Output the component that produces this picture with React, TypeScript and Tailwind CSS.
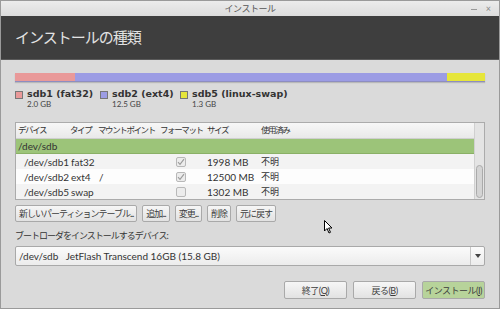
const font = { fontFamily: '"Lato", "Noto Sans CJK JP", sans-serif' };

function Check({ on }: { on: boolean }) {
  return (
    <div className="w-[10px] h-[10px] border border-[#b8b8b8] bg-[#ececec] rounded-[2px] flex items-center justify-center">
      {on && (
        <svg width="8" height="8" viewBox="0 0 8 8">
          <path d="M1 4.2 L3 6.3 L7 1.2" stroke="#9a9a9a" strokeWidth="1.1" fill="none" />
        </svg>
      )}
    </div>
  );
}

const rows = [
  { dev: "/dev/sdb1", type: "fat32", mount: "", fmt: true, size: "1998 MB", bg: "bg-[#f3f3f3]" },
  { dev: "/dev/sdb2", type: "ext4", mount: "/", fmt: true, size: "12500 MB", bg: "bg-[#fdfdfd]" },
  { dev: "/dev/sdb5", type: "swap", mount: "", fmt: false, size: "1302 MB", bg: "bg-[#f3f3f3]" },
];

const legend = [
  { name: "sdb1 (fat32)", size: "2.0 GB", color: "bg-[#e99999]", w: "w-[85px]" },
  { name: "sdb2 (ext4)", size: "12.5 GB", color: "bg-[#9c9ce4]", w: "w-[80px]" },
  { name: "sdb5 (linux-swap)", size: "1.3 GB", color: "bg-[#e6e63a]", w: "" },
];

function Btn({ children, className = "" }: { children: React.ReactNode; className?: string }) {
  return (
    <div
      className={`px-[3px] flex items-center whitespace-nowrap border border-[#a9a9a9] rounded-[2px] text-[9px] leading-none text-[#3c3c3c] ${className}`}
    >
      {children}
    </div>
  );
}

const grad = "bg-gradient-to-b from-[#f6f6f6] to-[#e2e2e2]";

export default function App() {
  return (
    <div style={font} className="w-[500px] h-[309px] bg-[#dadada] border border-[#9a9a9a] flex flex-col overflow-hidden relative">
      <div className="h-[15px] bg-gradient-to-b from-[#ececec] to-[#dcdcdc] flex items-center justify-center relative">
        <span className="text-[9px] text-[#555] tracking-[-0.5px] leading-none">インストール</span>
        <div className="absolute right-[8px] top-[2px] flex gap-[9px] items-center text-[#888] text-[9px] leading-[11px]">
          <span className="w-[6px] h-[1px] bg-[#999] mt-[1px]" />
          <span>×</span>
        </div>
      </div>
      <div className="h-[44px] bg-[#3e3e3e] border-b border-[#5a5a5a] flex items-center pl-[14px]">
        <span className="text-[15px] text-[#e2e2e2] tracking-[-1px] leading-none">インストールの種類</span>
      </div>
      <div className="px-[14px] pt-[13px] flex flex-col">
        <div className="h-[9px] flex border-b border-[#8d8dc0] shadow-[0_1px_1px_rgba(0,0,0,0.15)]">
          <div className="w-[60px] bg-[#e99999]" />
          <div className="flex-1 bg-[#9c9ce4]" />
          <div className="w-[38px] bg-[#e6e63a]" />
        </div>
        <div className="flex mt-[6px]">
          {legend.map((l) => (
            <div key={l.name} className={`flex gap-[4px] shrink-0 ${l.w}`}>
              <div className={`w-[8px] h-[8px] mt-[3px] border border-[#777] ${l.color}`} />
              <div className="flex flex-col leading-none">
                <span className="text-[9.5px] font-bold text-[#333] leading-[11px]" style={{ fontFamily: '"DejaVu Sans", sans-serif' }}>{l.name}</span>
                <span className="text-[8px] text-[#444] mt-[1px]">{l.size}</span>
              </div>
            </div>
          ))}
        </div>
        <div className="mt-[14px] h-[78px] border border-[#ababab] bg-[#fdfdfd] flex text-[10px] text-[#333] leading-none whitespace-nowrap">
          <div className="flex-1 flex flex-col">
            <div className="h-[16px] bg-gradient-to-b from-[#f7f7f7] to-[#e9e9e9] border-b border-[#cfcfcf] flex items-center text-[8.5px] tracking-[-1.4px]">
              <span className="w-[54px] shrink-0 pl-[2px]">デバイス</span>
              <span className="w-[28px] shrink-0">タイプ</span>
              <span className="w-[62px] shrink-0">マウントポイント</span>
              <span className="w-[47px] shrink-0">フォーマット</span>
              <span className="w-[54px] shrink-0">サイズ</span>
              <span>使用済み</span>
            </div>
            <div className="h-[15px] bg-[#9cc479] border-b border-[#8ab066] flex items-center pl-[2px]">/dev/sdb</div>
            {rows.map((r) => (
              <div key={r.dev} className={`h-[15px] flex items-center ${r.bg}`}>
                <span className="w-[55px] shrink-0 pl-[8px]">{r.dev}</span>
                <span className="w-[28px] shrink-0">{r.type}</span>
                <span className="w-[77px] shrink-0">{r.mount}</span>
                <span className="w-[31px] shrink-0"><Check on={r.fmt} /></span>
                <span className="w-[54px] shrink-0">{r.size}</span>
                <span className="text-[9px]">不明</span>
              </div>
            ))}
          </div>
          <div className="w-[10px] bg-[#e4e4e4] border-l border-[#d0d0d0] flex flex-col justify-end p-[1px]">
            <div className="h-[33px] bg-[#d4d4d4] border border-[#aaa] rounded-[4px]" />
          </div>
        </div>
        <div className="flex gap-[5px] mt-[5px] h-[17px] tracking-[-1px]">
          <Btn className={grad}>新しいパーティションテーブル...</Btn>
          <Btn className={grad}>追加...</Btn>
          <Btn className={grad}>変更...</Btn>
          <Btn className={grad}>削除</Btn>
          <Btn className={grad}>元に戻す</Btn>
        </div>
        <div className="mt-[8px] text-[9px] tracking-[-1px] leading-[11px] text-[#333]">ブートローダをインストールするデバイス:</div>
        <div className="mt-[5px] h-[20px] border border-[#a9a9a9] rounded-[2px] bg-gradient-to-b from-[#fbfbfb] to-[#ececec] flex items-center text-[10px] leading-none text-[#333]">
          <span className="flex-1 pl-[3px]">/dev/sdb&nbsp;&nbsp;&nbsp;JetFlash Transcend 16GB (15.8 GB)</span>
          <div className="w-[14px] h-full border-l border-[#c8c8c8] flex items-center justify-center">
            <svg width="6" height="4" viewBox="0 0 6 4"><path d="M0 0 H6 L3 4 Z" fill="#444" /></svg>
          </div>
        </div>
        <div className="flex justify-end gap-[6px] mt-[15px] h-[18px] tracking-[-0.5px]">
          <Btn className={`w-[63px] justify-center ${grad}`}>終了(<span className="underline">Q</span>)</Btn>
          <Btn className={`w-[63px] justify-center ${grad}`}>戻る(<span className="underline">B</span>)</Btn>
          <Btn className="w-[63px] justify-center bg-[#b7d39a] border-[#98b27c]">インストール(<span className="underline">I</span>)</Btn>
        </div>
      </div>
      <svg className="absolute left-[323px] top-[219px]" width="10" height="14" viewBox="0 0 10 14">
        <path d="M0.5 0.5 L0.5 11 L3 8.5 L5 13 L6.5 12.3 L4.6 8 L8 8 Z" fill="#fff" stroke="#000" strokeWidth="1" />
      </svg>
    </div>
  );
}
